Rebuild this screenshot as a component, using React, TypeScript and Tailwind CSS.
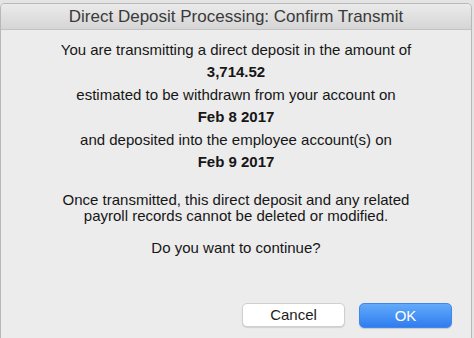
export default function App() {
  return (
    <div className="w-[474px] h-[338px] overflow-hidden bg-[#e4e4e4] pt-[3px] font-['Liberation_Sans',Arial,sans-serif]">
      <div className="w-[472px] h-[335px] flex flex-col border-x border-t border-[#b8b8b8] rounded-t-[5px] bg-[#ececec] overflow-hidden">
        {/* Title bar */}
        <div className="h-[26px] shrink-0 flex items-center justify-center bg-gradient-to-b from-[#ebebeb] to-[#d5d5d5] border-b border-[#c2c2c2]">
          <span className="text-[17px] text-[#3a3a3a] leading-none">Direct Deposit Processing: Confirm Transmit</span>
        </div>

        {/* Message */}
        <div className="flex flex-col items-center text-center text-[15px] text-[#161616] pt-[8.5px]">
          <p className="leading-[22.5px]">You are transmitting a direct deposit in the amount of</p>
          <p className="leading-[22.5px] font-bold">3,714.52</p>
          <p className="leading-[22.5px]">estimated to be withdrawn from your account on</p>
          <p className="leading-[22.5px] font-bold">Feb 8 2017</p>
          <p className="leading-[22.5px]">and deposited into the employee account(s) on</p>
          <p className="leading-[22.5px] font-bold">Feb 9 2017</p>

          <p className="leading-[16px] mt-[18px]">
            Once transmitted, this direct deposit and any related
            <br />
            payroll records cannot be deleted or modified.
          </p>

          <p className="leading-[16px] mt-[16px]">Do you want to continue?</p>
        </div>

        {/* Buttons */}
        <div className="flex justify-end gap-[14px] pr-[19px] mt-[47px]">
          <button
            type="button"
            className="w-[103px] h-[24px] rounded-[5px] bg-white border border-[#cfcfcf] shadow-[0_1px_1px_rgba(0,0,0,0.12)] text-[15px] text-[#1c1c1c] leading-none"
          >
            Cancel
          </button>
          <button
            type="button"
            className="w-[93px] h-[25px] rounded-[5px] bg-gradient-to-b from-[#63aaf8] to-[#2f7cf0] border border-[#3f86ee] shadow-[0_1px_1px_rgba(0,0,0,0.15)] text-[15px] text-white leading-none"
          >
            OK
          </button>
        </div>
      </div>
    </div>
  )
}
